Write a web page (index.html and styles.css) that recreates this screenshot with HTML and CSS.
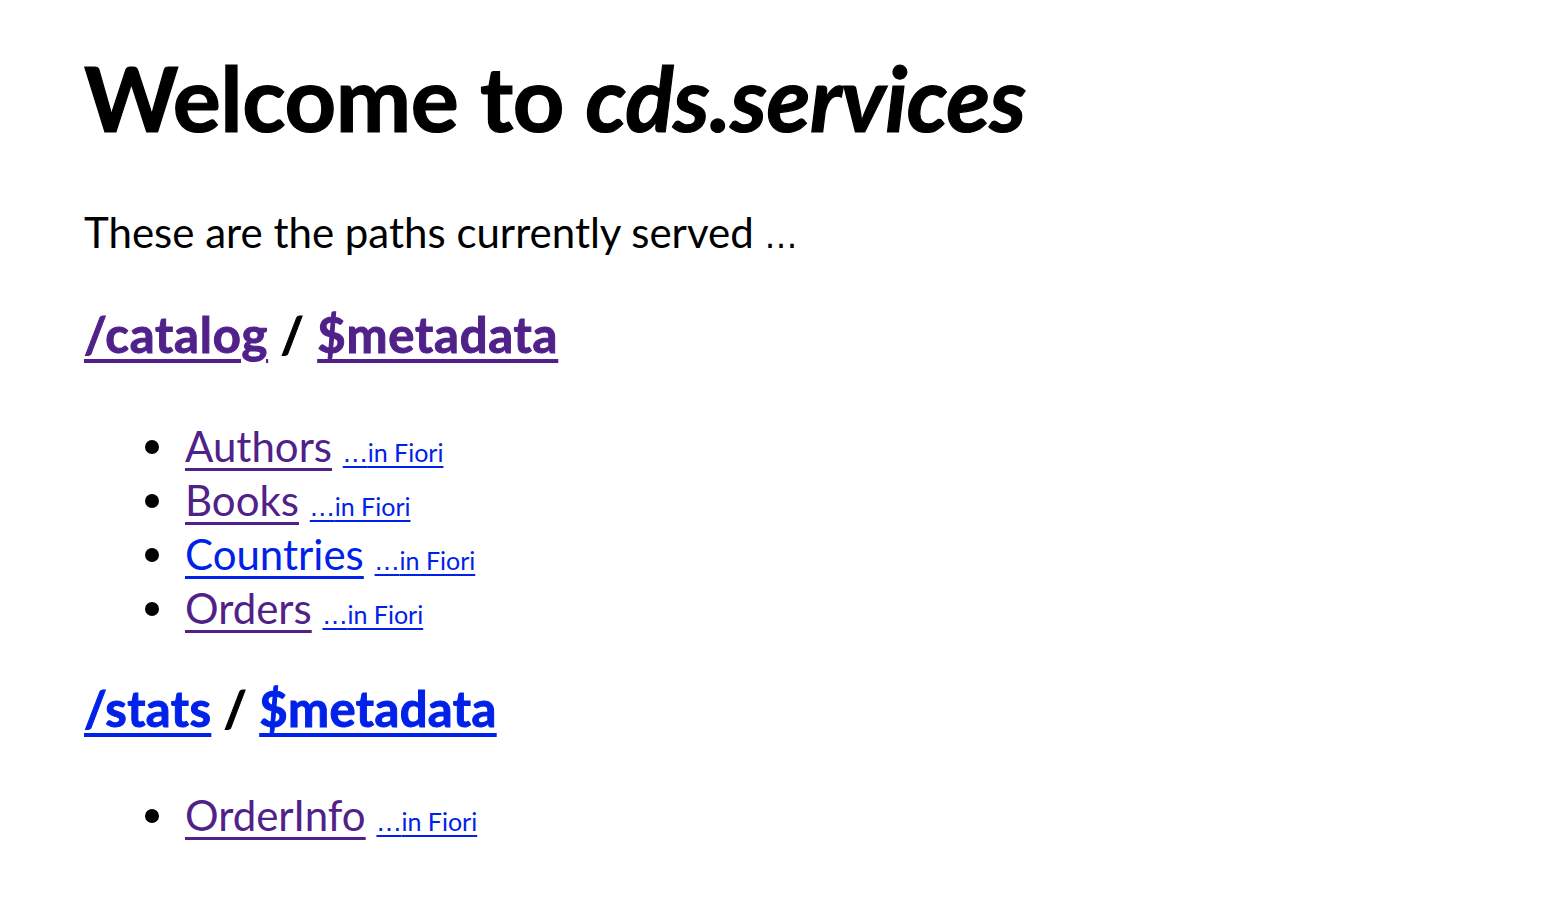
FILE: index.html
```html
<!DOCTYPE html>
<html lang="en">
<head>
<meta charset="utf-8">
<title>Welcome to cds.services</title>
<link rel="stylesheet" href="styles.css">
</head>
<body>
<h1 class="title">Welcome to <i>cds.services</i></h1>
<p class="intro">These are the paths currently served <span class="ellipsis intro-ellipsis">…</span></p>

<h2 class="service"><a class="link visited" href="#catalog">/catalog</a> / <a class="link visited" href="#catalog-metadata">$metadata</a></h2>
<ul class="entities entities-first">
  <li><a class="link visited" href="#authors">Authors</a> <a class="fiori link" href="#fiori-authors"><span class="ellipsis">…</span>in Fiori</a></li>
  <li><a class="link visited" href="#books">Books</a> <a class="fiori link" href="#fiori-books"><span class="ellipsis">…</span>in Fiori</a></li>
  <li><a class="link" href="#countries">Countries</a> <a class="fiori link" href="#fiori-countries"><span class="ellipsis">…</span>in Fiori</a></li>
  <li><a class="link visited" href="#orders">Orders</a> <a class="fiori link" href="#fiori-orders"><span class="ellipsis">…</span>in Fiori</a></li>
</ul>

<h2 class="service service-second"><a class="link" href="#stats">/stats</a> / <a class="link" href="#stats-metadata">$metadata</a></h2>
<ul class="entities entities-second">
  <li><a class="link visited" href="#orderinfo">OrderInfo</a> <a class="fiori link" href="#fiori-orderinfo"><span class="ellipsis">…</span>in Fiori</a></li>
</ul>
</body>
</html>
```

FILE: styles.css
```css
html, body {
  background: #ffffff;
}

body {
  margin: 0;
  padding: 0 84px;
  font-family: Lato, "Noto Sans", sans-serif;
  color: #000000;
}

.link {
  color: #0022e8;
  text-decoration: underline;
  text-decoration-thickness: 3px;
  text-underline-offset: 6px;
}

.link.visited {
  color: #51218a;
}

.ellipsis {
  font-family: "DejaVu Sans", sans-serif;
  font-weight: 400;
}

.intro-ellipsis {
  font-size: 33px;
}

.title {
  margin: 42px 0 0;
  font-size: 90px;
  line-height: 110px;
  font-weight: 700;
  letter-spacing: -0.4px;
  -webkit-text-stroke: 1.2px #000000;
}

.title i {
  font-style: italic;
}

.intro {
  margin: 53px 0 0;
  font-size: 42px;
  line-height: 54px;
}

.service {
  margin: 40px 0 0;
  font-size: 49px;
  line-height: 60px;
  font-weight: 700;
  letter-spacing: 0.8px;
  -webkit-text-stroke: 1px currentColor;
}

.service .link {
  -webkit-text-stroke: 1px currentColor;
  text-decoration-thickness: 4px;
  text-underline-offset: 6px;
}

.service-second {
  margin-top: 43px;
  letter-spacing: 0.4px;
}

.entities {
  margin: 55px 0 0;
  padding-left: 101px;
  font-size: 42px;
  line-height: 54px;
  list-style: none;
}

.entities-second {
  margin-top: 50px;
}

.entities li {
  position: relative;
  height: 54px;
}

.entities li::before {
  content: "";
  position: absolute;
  left: -40px;
  top: 21px;
  width: 14px;
  height: 14px;
  border-radius: 50%;
  background: #000000;
}

.fiori {
  font-size: 25px;
  line-height: 1;
  text-decoration-thickness: 2px;
  text-underline-offset: 4px;
}
```
